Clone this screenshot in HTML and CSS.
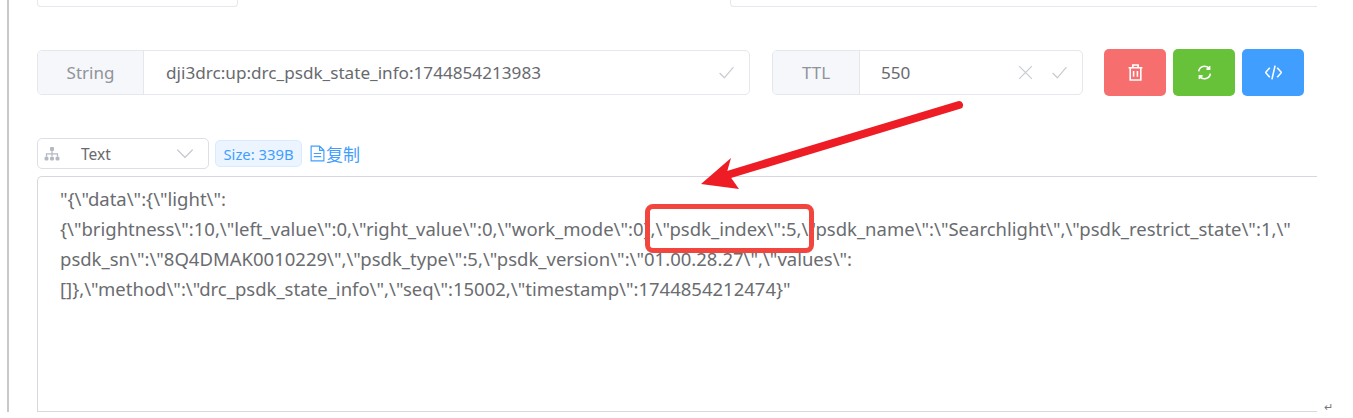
FILE: index.html
```html
<!DOCTYPE html>
<html lang="zh">
<head>
<meta charset="utf-8">
<title>Redis key</title>
<link rel="stylesheet" href="styles.css">
</head>
<body>
<main class="panel">
  <div class="top-row">
    <div class="top-box top-left"></div>
    <div class="top-box top-right"></div>
  </div>
  <div class="key-row">
    <div class="group group-key">
      <span class="addon addon-key">String</span>
      <span class="value value-key">dji3drc:up:drc_psdk_state_info:1744854213983</span>
      <svg class="ico check" viewBox="0 0 16 16"><path d="M1.500 8.500l4.500 4.500 8.500-10"/></svg>
    </div>
    <div class="group group-ttl">
      <span class="addon addon-ttl">TTL</span>
      <span class="value value-ttl">550</span>
      <svg class="ico cross" viewBox="0 0 16 16"><path d="M2 2l12 12M14 2L2 14"/></svg>
      <svg class="ico check" viewBox="0 0 16 16"><path d="M1.500 8.500l4.500 4.500 8.500-10"/></svg>
    </div>
    <div class="actions">
      <button class="btn btn-red" type="button" aria-label="delete">
        <svg viewBox="0 0 16 16"><path d="M1.500 3.500h13M5.500 3.500V1h5v2.500M3 3.500V15h10V3.500M6.200 6.500v5.500M9.800 6.500v5.500"/></svg>
      </button>
      <button class="btn btn-green" type="button" aria-label="refresh">
        <svg viewBox="0 0 16 16"><path d="M2.500 7A5.600 5.600 0 0 1 12.500 4.300M13.500 9A5.600 5.600 0 0 1 3.500 11.700M12.800 1.800v3h-3M3.200 14.200v-3h3"/></svg>
      </button>
      <button class="btn btn-blue" type="button" aria-label="code">
        <svg viewBox="0 0 16 16"><path d="M4.500 3.500L0.500 8l4 4.500M11.500 3.500l4 4.500-4 4.500M9.500 1.500l-3 13"/></svg>
      </button>
    </div>
  </div>
  <div class="format-row">
    <div class="select">
      <svg class="tree" viewBox="0 0 16 16"><rect x="6" y="1" width="4" height="4" rx="1"/><rect x="0.500" y="10.500" width="4" height="4" rx="1.500"/><rect x="6" y="10.500" width="4" height="4" rx="1.500"/><rect x="11.500" y="10.500" width="4" height="4" rx="1.500"/><path class="tree-line" d="M8 5v5M2.500 10.500V7.800h11v2.700"/></svg>
      <span class="select-text">Text</span>
      <svg class="chev" viewBox="0 0 16 10"><path d="M1 1.500l7 7 7-7"/></svg>
    </div>
    <span class="tag">Size: 339B</span>
    <a class="copy">
      <svg viewBox="0 0 14 16"><path d="M1 1h8l4 4v10H1zM9 1v4h4M3.500 8h7M3.500 11h7"/></svg>复制
    </a>
  </div>
  <div class="content">"{\"data\":{\"light\":<br>{\"brightness\":10,\"left_value\":0,\"right_value\":0,\"work_mode\":0},\"psdk_index\":5,\"psdk_name\":\"Searchlight\",\"psdk_restrict_state\":1,\"<br>psdk_sn\":\"8Q4DMAK0010229\",\"psdk_type\":5,\"psdk_version\":\"01.00.28.27\",\"values\":<br>[]},\"method\":\"drc_psdk_state_info\",\"seq\":15002,\"timestamp\":1744854212474}"</div>
</main>
<div class="highlight"></div>
<svg class="arrow" viewBox="0 0 1353 418"><path class="arrow-shaft" d="M959 105L724 176"/><path class="arrow-head" d="M701 184L731 158L727 172L739 189Z"/></svg>
<span class="para-mark">↵</span>
</body>
</html>
```
FILE: styles.css
```css
* { box-sizing: border-box; }
html, body { margin: 0; height: 418px; overflow: hidden; background: #fff; }
body { position: relative; font-family: "Noto Sans", "Noto Sans CJK SC", sans-serif; color: #606266; padding-left: 7px; }

.panel { width: 1310px; height: 412px; border-left: 2px solid #c9c9c9; padding-left: 28px; display: flex; flex-direction: column; overflow: hidden; }

.top-row { display: flex; height: 7px; gap: 492px; flex: none; }
.top-box { border: 1px solid #e4e7ed; border-top: 0; border-radius: 0 0 4px 4px; height: 7px; flex: none; }
.top-left { width: 201px; }
.top-right { width: 587px; border-right: 0; border-radius: 0 0 0 4px; }

.key-row { display: flex; align-items: center; margin-top: 42px; height: 47px; flex: none; }
.group { display: flex; align-items: center; height: 45px; border: 1.500px solid #e4e7ed; border-radius: 5px; overflow: hidden; background: #fff; flex: none; }
.group-key { width: 713px; }
.group-ttl { width: 311px; margin-left: 22px; }
.addon { display: flex; align-items: center; justify-content: center; height: 100%; background: #f5f7fa; border-right: 1.500px solid #e4e7ed; font-size: 17px; color: #909399; flex: none; }
.addon-key { width: 106px; }
.addon-ttl { width: 87px; }
.value { flex: 1; font-size: 17.150px; color: #686a6e; white-space: nowrap; }
.value-key { padding-left: 22px; }
.value-ttl { padding-left: 21px; }
.ico { width: 17px; height: 17px; fill: none; stroke: #c8ccd3; stroke-width: 1.200; flex: none; }
.check { margin-right: 14px; }
.cross { margin-right: 17px; }

.actions { display: flex; gap: 7px; margin-left: 21px; }
.btn { width: 62px; height: 47px; border: 0; border-radius: 5px; padding: 0; display: flex; align-items: center; justify-content: center; }
.btn svg { width: 17px; height: 17px; fill: none; stroke: #fff; stroke-width: 1.500; }
.btn-red { background: #f76e6e; }
.btn-green { background: #67c23a; }
.btn-blue { background: #409eff; }

.format-row { display: flex; align-items: center; margin-top: 42px; height: 31px; flex: none; }
.select { width: 172px; height: 31px; border: 1.500px solid #dcdfe6; border-radius: 5px; display: flex; align-items: center; padding-left: 6px; }
.tree { width: 16px; height: 16px; fill: #b4b8c0; flex: none; }
.tree-line { fill: none; stroke: #b4b8c0; stroke-width: 1.200; }
.select-text { margin-left: 21px; font-size: 15.500px; color: #686a6e; flex: 1; }
.chev { width: 18px; height: 11px; fill: none; stroke: #c0c4cc; stroke-width: 1.200; margin-right: 14px; }
.tag { margin-left: 6px; width: 87px; height: 27px; background: #ecf5ff; border: 1.500px solid #d9ecff; border-radius: 5px; color: #409eff; font-size: 14.800px; display: flex; align-items: center; justify-content: center; white-space: nowrap; }
.copy { margin-left: 8px; display: flex; align-items: center; color: #409eff; font-size: 17px; }
.copy svg { width: 15px; height: 17px; fill: none; stroke: #409eff; stroke-width: 1.100; margin-right: 1px; }

.content { margin-top: 7px; height: 240px; border: 1.500px solid #d5d8de; border-right: 0; border-radius: 5px 0 0 0; padding: 7px 0 0 22px; font-size: 18.500px; line-height: 30px; color: #6a6c70; white-space: nowrap; }

.highlight { position: absolute; left: 645px; top: 204px; width: 169px; height: 49px; border: 5px solid #f2453d; border-radius: 8px; }
.arrow { position: absolute; left: 0; top: 0; width: 1353px; height: 418px; pointer-events: none; }
.arrow-shaft { stroke: #ee1c25; stroke-width: 8; stroke-linecap: round; fill: none; }
.arrow-head { fill: #ee1c25; }
.para-mark { position: absolute; left: 1324px; top: 400px; font-size: 11px; line-height: 14px; color: #777; }
```
